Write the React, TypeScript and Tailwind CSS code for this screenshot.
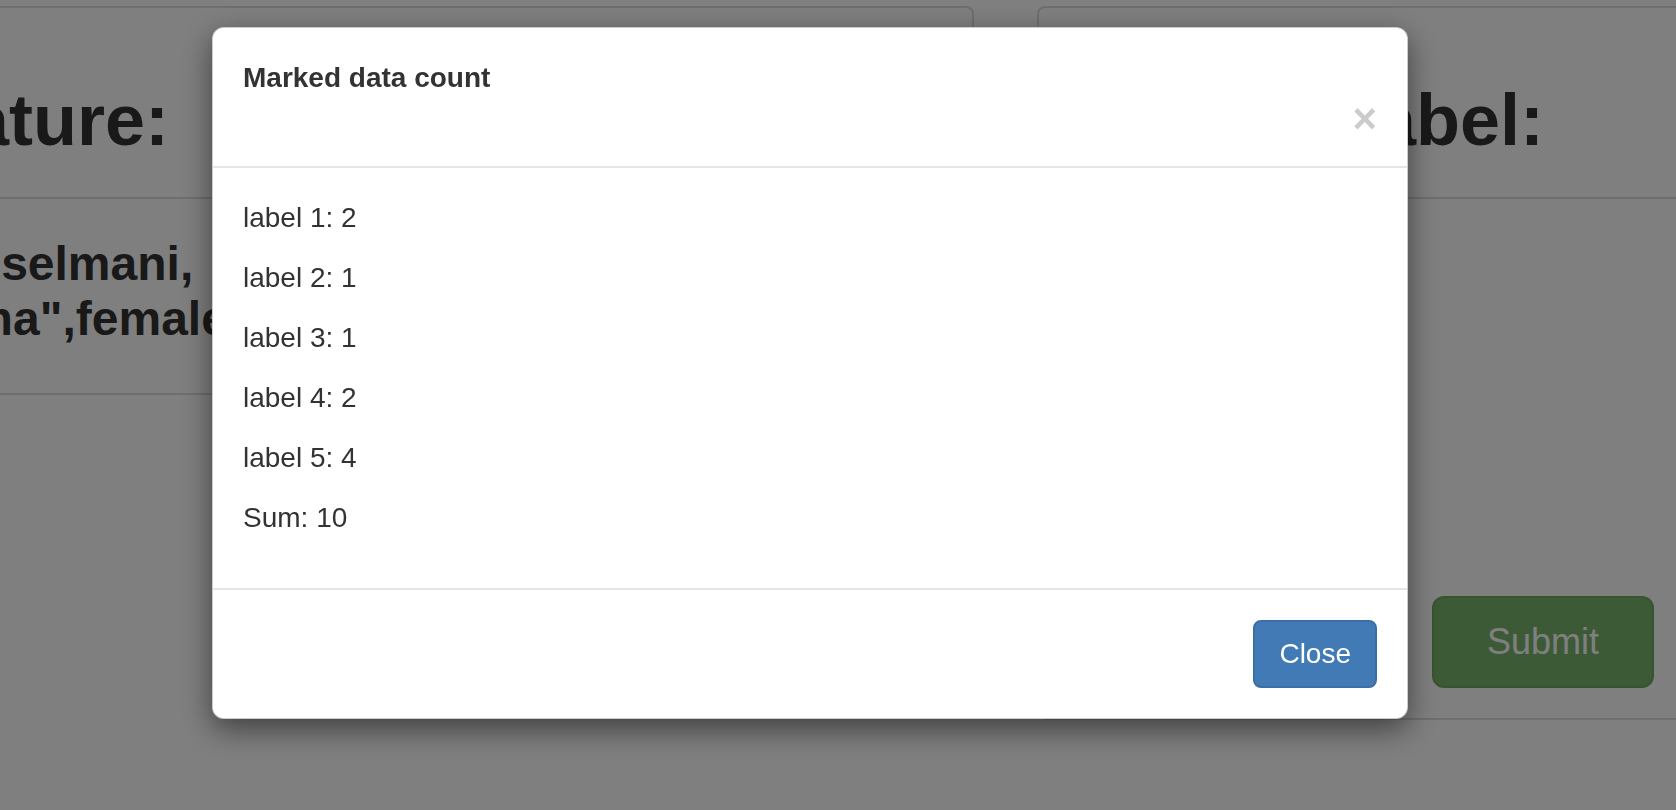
import { useState } from 'react';

const counts = [
  { label: 'label 1', value: 2 },
  { label: 'label 2', value: 1 },
  { label: 'label 3', value: 1 },
  { label: 'label 4', value: 2 },
  { label: 'label 5', value: 4 },
];

function Panel({
  title,
  className,
  children,
}: {
  title: string;
  className: string;
  children: React.ReactNode;
}) {
  return (
    <section
      className={`shrink-0 rounded-[8px] border-2 border-[#dddddd] bg-white ${className}`}
    >
      <div className="border-b-2 border-[#dddddd] pt-[72px] pb-[37px] pl-[30px]">
        <h1 className="whitespace-nowrap text-[72px] font-bold leading-[80px] text-[#333333]">
          {title}
        </h1>
      </div>
      {children}
    </section>
  );
}

export default function App() {
  const [open, setOpen] = useState(true);
  const sum = counts.reduce((total, item) => total + item.value, 0);

  return (
    <div className="relative h-screen w-full overflow-hidden bg-white font-['Liberation_Sans',Arial,sans-serif]">
      <div className="-ml-[147px] flex items-start gap-[63px] pt-[6px]">
        <Panel title="Feature:" className="w-[1121px]">
          <div className="pt-[37px] pb-[47px] pl-[30px] text-[48px] font-bold leading-[55px] text-[#333333]">
            <p className="whitespace-nowrap">"Masselmani,</p>
            <p className="whitespace-nowrap">Fatima",female,,0,0,2649,7.225,,C</p>
          </div>
        </Panel>

        <Panel title="Current label:" className="w-[647px] [&>div:first-child]:pl-[37px]">
          <div className="flex justify-end pt-[397px] pr-[28px] pb-[30px]">
            <button
              onClick={() => setOpen(true)}
              className="h-[92px] w-[222px] rounded-[12px] border-2 border-[#6fa862] bg-[#79b46b] text-[36px] text-white"
            >
              Submit
            </button>
          </div>
        </Panel>
      </div>

      {open ? (
        <>
          <div className="fixed inset-0 bg-black/50" />
          <div className="fixed inset-0 pt-[27px] pl-[212px]">
            <div className="w-[1196px] rounded-[12px] border border-black/20 bg-white text-[#333333] shadow-[0_10px_30px_rgba(0,0,0,0.5)]">
              <div className="flex flex-col border-b-2 border-[#e5e5e5] px-[30px] pt-[30px] pb-[26px]">
                <h4 className="text-[28px] font-bold leading-[40px]">
                  Marked data count
                </h4>
                <div className="flex justify-end">
                  <button
                    onClick={() => setOpen(false)}
                    className="text-[42px] font-bold leading-none text-black opacity-20"
                  >
                    ×
                  </button>
                </div>
              </div>

              <div className="p-[30px] text-[28px] leading-[40px]">
                {counts.map((item) => (
                  <p key={item.label} className="mb-[20px]">
                    {item.label}: {item.value}
                  </p>
                ))}
                <p className="mb-[20px]">Sum: {sum}</p>
              </div>

              <div className="flex justify-end border-t-2 border-[#e5e5e5] p-[30px]">
                <button
                  onClick={() => setOpen(false)}
                  className="rounded-[8px] border-2 border-[#3a6ea6] bg-[#417ab4] px-[24px] py-[12px] text-[28px] leading-[40px] text-white"
                >
                  Close
                </button>
              </div>
            </div>
          </div>
        </>
      ) : null}
    </div>
  );
}
